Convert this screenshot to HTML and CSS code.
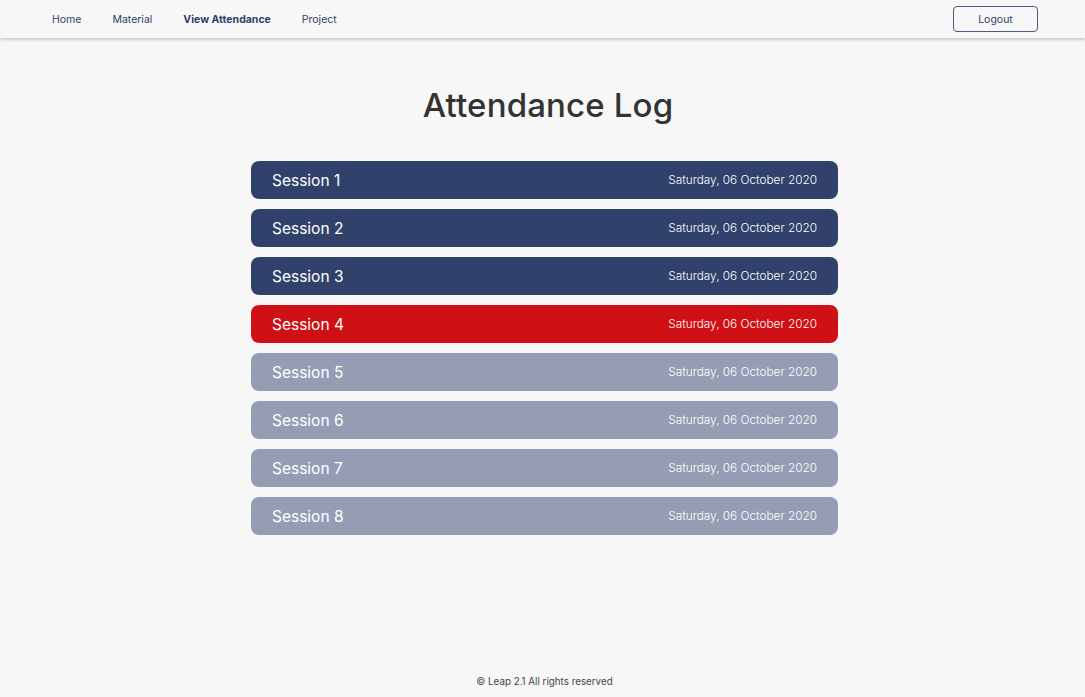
FILE: index.html
```html
<!DOCTYPE html>
<html lang="en">
<head>
<meta charset="utf-8">
<title>Attendance Log</title>
<link rel="stylesheet" href="styles.css">
</head>
<body>
<header class="navbar">
  <nav class="nav-links">
    <a class="nav-link" href="#">Home</a>
    <a class="nav-link" href="#">Material</a>
    <a class="nav-link active" href="#">View Attendance</a>
    <a class="nav-link" href="#">Project</a>
  </nav>
  <button class="logout">Logout</button>
</header>
<main class="content">
  <h1 class="title">Attendance Log</h1>
  <ul class="sessions">
    <li class="session done"><span class="name">Session 1</span><span class="date">Saturday, 06 October 2020</span></li>
    <li class="session done"><span class="name">Session 2</span><span class="date">Saturday, 06 October 2020</span></li>
    <li class="session done"><span class="name">Session 3</span><span class="date">Saturday, 06 October 2020</span></li>
    <li class="session missed"><span class="name">Session 4</span><span class="date">Saturday, 06 October 2020</span></li>
    <li class="session upcoming"><span class="name">Session 5</span><span class="date">Saturday, 06 October 2020</span></li>
    <li class="session upcoming"><span class="name">Session 6</span><span class="date">Saturday, 06 October 2020</span></li>
    <li class="session upcoming"><span class="name">Session 7</span><span class="date">Saturday, 06 October 2020</span></li>
    <li class="session upcoming"><span class="name">Session 8</span><span class="date">Saturday, 06 October 2020</span></li>
  </ul>
</main>
<footer class="footer">© Leap 2.1 All rights reserved</footer>
</body>
</html>
```
FILE: styles.css
```css
* { box-sizing: border-box; }
html, body { height: 100%; }
body {
  margin: 0;
  background: #f7f7f7;
  font-family: Inter, "Noto Sans", sans-serif;
  color: #333;
  display: flex;
  flex-direction: column;
}
.navbar {
  height: 38px;
  background: #f7f7f7;
  box-shadow: 0 2px 3px rgba(0,0,0,0.18);
  display: flex;
  align-items: center;
  justify-content: space-between;
  padding: 0 47px 0 52px;
}
.nav-links { display: flex; gap: 31px; }
.nav-link {
  font-size: 10.5px;
  color: #2f3f6a;
  text-decoration: none;
}
.nav-link.active { font-weight: 700; }
.logout {
  width: 85px;
  height: 26px;
  background: transparent;
  border: 1px solid #4d5a82;
  border-radius: 4px;
  font-family: inherit;
  font-size: 10.5px;
  color: #2f3f6a;
}
.content {
  flex: 1;
  display: flex;
  flex-direction: column;
  align-items: center;
}
.title {
  margin: 47px 0 0 11px;
  font-size: 33px;
  font-weight: 500;
  letter-spacing: 0.15px;
  color: #333;
  line-height: 41px;
}
.sessions {
  list-style: none;
  margin: 35px 0 0 4px;
  padding: 0;
  width: 587px;
  display: flex;
  flex-direction: column;
  gap: 10px;
}
.session {
  height: 38px;
  border-radius: 8px;
  display: flex;
  align-items: center;
  justify-content: space-between;
  padding: 0 21px;
  color: #fff;
}
.session.done { background: #30416b; }
.session.missed { background: #cf1014; }
.session.upcoming { background: #959db4; }
.name { font-size: 15.5px; font-weight: 400; }
.date { font-size: 11.8px; font-weight: 300; }
.footer {
  text-align: center;
  font-size: 9.8px;
  color: #444;
  padding-bottom: 10px;
  padding-left: 4px;
}
```
